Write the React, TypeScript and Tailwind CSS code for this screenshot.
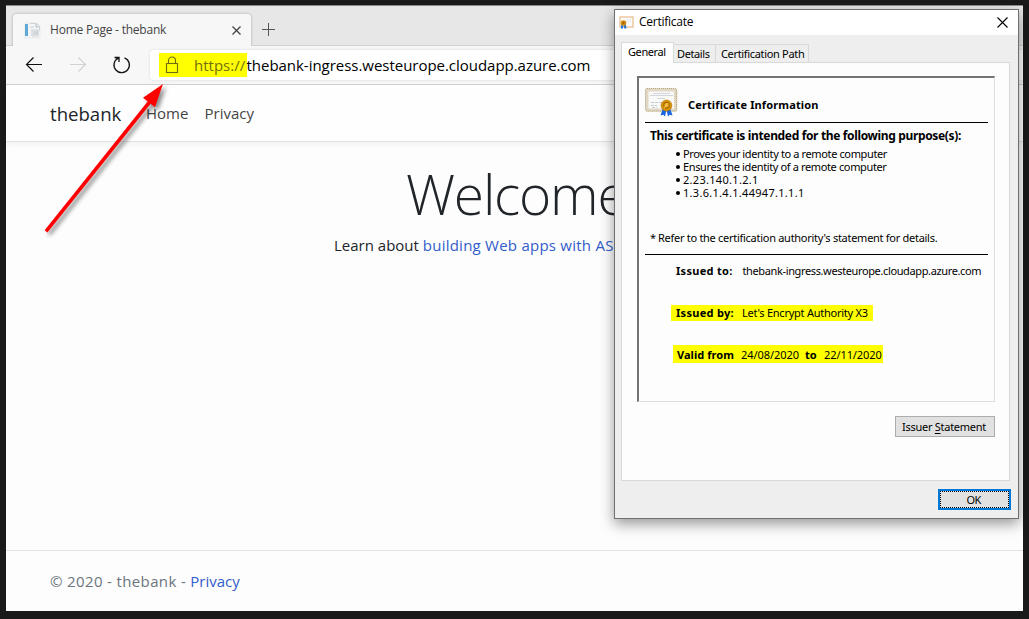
import React from "react";

const ui = "font-['Open_Sans','Noto_Sans',sans-serif]";
const classic = "font-['Noto_Sans','DejaVu_Sans',sans-serif]";

function PageIcon() {
  return (
    <svg width="17" height="17" viewBox="0 0 17 17" className="block shrink-0">
      <path d="M1 1h12l3 3v12H1z" fill="#f2f4f5" stroke="#e6e9eb" />
      <rect x="1" y="2" width="3" height="12" fill="#5fa9d6" />
      <path d="M6 1.500h6.500l3 3V9M6 5h4M7 8h7v6H8V8" fill="none" stroke="#cfd3d7" />
      <path d="M9 10h5M9 12h5M12 2v3h3" fill="none" stroke="#b4bac0" />
    </svg>
  );
}

function SmallCertificate() {
  return (
    <svg width="15" height="13" viewBox="0 0 15 13" className="block shrink-0">
      <rect x="1" y="1" width="13" height="10" fill="#fbfbfb" stroke="#ecc9a0" strokeWidth="1.5" />
      <path d="M7 4h5M8 6h4" stroke="#e6e9ee" />
      <path d="M3.500 8L2.800 12.500M5.500 8l1 4.500" stroke="#1d70df" strokeWidth="2" />
      <circle cx="4.500" cy="7" r="2.800" fill="#d28a08" />
      <circle cx="4.500" cy="7" r="1" fill="#9a5c00" />
    </svg>
  );
}

function Certificate() {
  return (
    <svg width="33" height="29" viewBox="0 0 33 29" className="block shrink-0">
      <rect x="1.500" y="1.500" width="29.500" height="21" rx="1" fill="#f9f9f7" stroke="#e0d8c4" strokeWidth="2.600" />
      <rect x=".5" y=".5" width="31" height="22.500" rx="1.500" fill="none" stroke="#b5a27c" strokeDasharray="1 1" />
      <rect x="3" y="3" width="26.500" height="18" fill="none" stroke="#d6ccb4" strokeWidth=".7" />
      <path d="M8 5.500h17M5 7.500h23M12 10.500h8" stroke="#d3d6de" />
      <path d="M6 14.500h12M6 17.500h6M7 19.500h5" stroke="#c6cad4" strokeDasharray="3 1" />
      <path d="M18 20l-2.500 7.500 2.800-.800 1.700 1.800 1.800-8.500zM25 20l2.500 7.500-2.800-.800-1.700 1.800-1.800-8.500z" fill="#1768dc" />
      <circle cx="21.500" cy="17.500" r="5.400" fill="#d8940b" stroke="#c07b00" strokeWidth=".8" />
      <circle cx="21.500" cy="17.200" r="2.800" fill="#edb22d" stroke="#a86800" strokeWidth="1.100" />
      <path d="M19 20l4-5" stroke="#f8cd51" />
    </svg>
  );
}

function TabStrip() {
  return (
    <div className="flex h-[41px] shrink-0 items-end border-t border-[#8d8886] bg-[#e7e7e7]">
      <div className="h-8 w-[7px] border-b border-[#d0d0d0]" />
      <div className="flex h-8 w-[238px] items-center rounded-t bg-[#f7f7f7] pl-[11px] shadow-[0_0_3px_rgba(0,0,0,0.28)]">
        <PageIcon />
        <span className="ml-[9px] whitespace-nowrap text-[12px] tracking-[-0.22px] text-[#444]">Home Page - thebank</span>
        <svg width="9" height="9" viewBox="0 0 9 9" className="ml-auto mr-[10px] mt-px block">
          <path d="M.5.500l8 8M8.500.500l-8 8" stroke="#444" strokeWidth="1.300" />
        </svg>
      </div>
      <div className="flex h-8 flex-1 items-center border-b border-[#d0d0d0] pl-[11px]">
        <svg width="13" height="13" viewBox="0 0 13 13" className="block">
          <path d="M6.500 0v13M0 6.500h13" stroke="#555" />
        </svg>
      </div>
    </div>
  );
}

function Toolbar() {
  return (
    <div className="relative flex h-[39px] shrink-0 items-center border-b border-[#cfcfcf] bg-[#f7f7f7]">
      <svg width="144" height="38" viewBox="0 0 144 38" className="block shrink-0" fill="none">
        <path d="M36 18.500H20.500M27.500 11.500l-7 7 7 7" stroke="#111" strokeWidth="1.200" />
        <path d="M64 18.500h15.500M72.500 11.500l7 7-7 7" stroke="#d2d2d2" strokeWidth="1.200" />
        <path d="M118.500 11.800a7.700 7.700 0 1 1-6.300.300M108.500 11.500h4.500V16" stroke="#111" strokeWidth="1.300" />
      </svg>
      <div className="flex h-[30px] flex-1 items-center rounded-l bg-white pl-[9px] shadow-[0_0_3px_rgba(0,0,0,0.12)]">
        <div className="flex h-6 w-[88px] items-center bg-[#ff0] pl-[6px]">
          <svg width="14" height="18" viewBox="0 0 14 18" className="block shrink-0" fill="none" stroke="#706c13" strokeWidth="1.100">
            <rect x="1.500" y="7.500" width="11" height="9" />
            <path d="M3.500 7.500V4.500a3.500 3.500 0 0 1 7 0v3" />
          </svg>
          <span className="ml-[15px] whitespace-nowrap text-[15px] text-[#73700d]">https://</span>
        </div>
        <span className="-ml-[0.5px] whitespace-nowrap text-[15px] tracking-[-0.03px] text-black">thebank-ingress.westeurope.cloudapp.azure.com</span>
      </div>
    </div>
  );
}

function Website() {
  return (
    <>
      <nav className="flex h-[57px] shrink-0 items-center border-b border-[#dee0e2] bg-[#fefefe] pl-[44px] shadow-[0_4px_6px_rgba(0,0,0,0.035)]">
        <span className="w-[96px] pt-px text-[18.6px] text-[#212529]">thebank</span>
        <span className="w-[58.5px] text-[15px] text-[#454545]">Home</span>
        <span className="text-[15px] text-[#454545]">Privacy</span>
      </nav>
      <main className="flex flex-1 flex-col items-start overflow-hidden pt-[18px] text-[#212529]">
        <h1 className="mb-[6px] ml-[400px] whitespace-nowrap text-[55px] font-light leading-[67px] tracking-[-1.2px]">Welcome</h1>
        <p className="ml-[328px] whitespace-nowrap text-[15px] leading-6">
          Learn about <a className="tracking-[0.24px] text-[#315cca]">building Web apps with ASP.NET Core</a>.
        </p>
      </main>
      <footer className="flex h-[61px] shrink-0 items-center border-t border-[#dee2e6] pl-[44px] pt-px text-[15px] text-[#6c757d]">
        <span className="whitespace-pre tracking-[0.36px]">© 2020 - thebank - </span><a className="text-[#315cca]">Privacy</a>
      </footer>
    </>
  );
}

const purposes = [
  { text: "Proves your identity to a remote computer", spacing: "tracking-[-0.37px]" },
  { text: "Ensures the identity of a remote computer", spacing: "tracking-[-0.37px]" },
  { text: "2.23.140.1.2.1", spacing: "tracking-[0.3px]" },
  { text: "1.3.6.1.4.1.44947.1.1.1", spacing: "tracking-[0.3px]" },
];

function Details() {
  return (
    <div className="flex h-[326px] w-[358px] flex-col whitespace-nowrap border-b border-l-2 border-r border-t-2 border-b-[#dedede] border-l-[#737373] border-r-[#dedede] border-t-[#737373] pl-[6px] pr-[6px] leading-[13px]">
      <div className="flex h-[45px] shrink-0 items-start border-b border-black pt-[10px]">
        <Certificate />
        <strong className="ml-[10px] mt-[10px] text-[11px] tracking-[0.13px]">Certificate Information</strong>
      </div>
      <strong className="ml-[5px] mt-[6px] text-[12px] leading-[14px] tracking-[-0.35px]">This certificate is intended for the following purpose(s):</strong>
      <ul className="mt-[4px] flex flex-col pl-[31px]">
        {purposes.map(({ text, spacing }) => (
          <li key={text} className="flex items-center">
            <i className="mr-[3px] mt-px size-1 rounded-full bg-black" />
            <span className={spacing}>{text}</span>
          </li>
        ))}
      </ul>
      <p className="ml-[5px] mt-[32px] flex tracking-[-0.28px]"><span className="w-[8px]">*</span><span>Refer to the certification authority's statement for details.</span></p>
      <div className="mt-[10px] border-t border-black" />
      <p className="ml-[31px] mt-[9px] flex"><strong className="w-[66.5px] shrink-0 tracking-[0.3px]">Issued to:</strong><span className="tracking-[-0.37px]">thebank-ingress.westeurope.cloudapp.azure.com</span></p>
      <p className="ml-[26px] mt-[28px] flex h-4 w-[202px] items-center bg-[#ff0] pb-px pl-[5px]"><strong className="w-[66px] shrink-0 tracking-[0.3px]">Issued by:</strong><span className="tracking-[-0.25px]">Let's Encrypt Authority X3</span></p>
      <p className="ml-[28px] mt-[24px] flex h-[18px] w-[210px] items-center bg-[#ff0] pl-[4px]"><strong className="w-[64px] tracking-[0.05px]">Valid from</strong><span className="w-[64px] tracking-[-0.05px]">24/08/2020</span><strong className="w-[19px]">to</strong><span className="tracking-[-0.08px]">22/11/2020</span></p>
    </div>
  );
}

function CertificateDialog() {
  return (
    <section role="dialog" aria-label="Certificate" className={`absolute left-[608px] top-[4px] flex h-[510px] w-[405px] flex-col border border-[#707070] bg-[#eee] text-[11px] text-black shadow-[0_5px_13px_rgba(0,0,0,0.4)] ${classic}`}>
      <header className="flex h-[25px] shrink-0 items-center bg-white pl-[4px] pr-[10px]">
        <SmallCertificate />
        <span className={`mb-px ml-[5px] text-[12px] tracking-[-0.25px] ${ui}`}>Certificate</span>
        <svg width="11" height="11" viewBox="0 0 11 11" className="ml-auto block"><path d="M.5.500l10 10M10.500.500l-10 10" stroke="#000" strokeWidth="1.100" /></svg>
      </header>
      <div className="relative z-10 ml-[6px] mt-[7px] flex h-[21px] shrink-0 items-end">
        <div className="h-[21px] w-[53px] border-x border-t border-[#d9d9d9] bg-[#fdfdfd] pl-[6px] pt-px tracking-[-0.4px]">General</div>
        <div className="h-[19px] w-[42px] border-b border-r border-t border-[#d9d9d9] pl-[3px] pt-px tracking-[-0.4px]">Details</div>
        <div className="h-[19px] w-[93px] whitespace-nowrap border-b border-r border-t border-[#d9d9d9] pl-[5px] pt-px tracking-[-0.33px]">Certification Path</div>
      </div>
      <div className="-mt-px ml-[6px] flex h-[419px] w-[389px] shrink-0 flex-col border border-[#d9d9d9] bg-[#fdfdfd] pl-[15px] pt-[13px]">
        <Details />
        <button className="ml-[258px] mt-[14px] h-[21px] w-[100px] whitespace-nowrap border border-[#adadad] bg-[#e1e1e1] pr-[2px] leading-[19px] tracking-[-0.28px]">Issuer <span className="underline underline-offset-2">S</span>tatement</button>
      </div>
      <button className="ml-[323px] mt-[8px] h-[21px] w-[73px] shrink-0 border-2 border-[#0078d7] bg-[#e1e1e1]">
        <span className="flex h-[17px] items-center justify-center border border-dotted border-black pr-[2px] pt-[2px] tracking-[-0.6px]">OK</span>
      </button>
    </section>
  );
}

export default function App() {
  return (
    <div className="flex h-[619px] w-[1029px] overflow-hidden bg-[#1a1a1a] pl-[6px] pt-[5px]">
      <div className={`relative flex h-[606px] w-[1017px] flex-col bg-[#fdfdfd] ${ui}`}>
        <TabStrip />
        <Toolbar />
        <Website />
        <CertificateDialog />
        <svg width="140" height="170" viewBox="0 0 140 170" className="absolute left-[30px] top-[70px] drop-shadow-[3px_3px_2px_rgba(0,0,0,0.45)]">
          <path d="M10 156.300L114 26.500" stroke="#f00" strokeWidth="3.600" />
          <path d="M127 9l-20 13.700 12 9.600z" fill="#f00" />
        </svg>
      </div>
    </div>
  );
}
